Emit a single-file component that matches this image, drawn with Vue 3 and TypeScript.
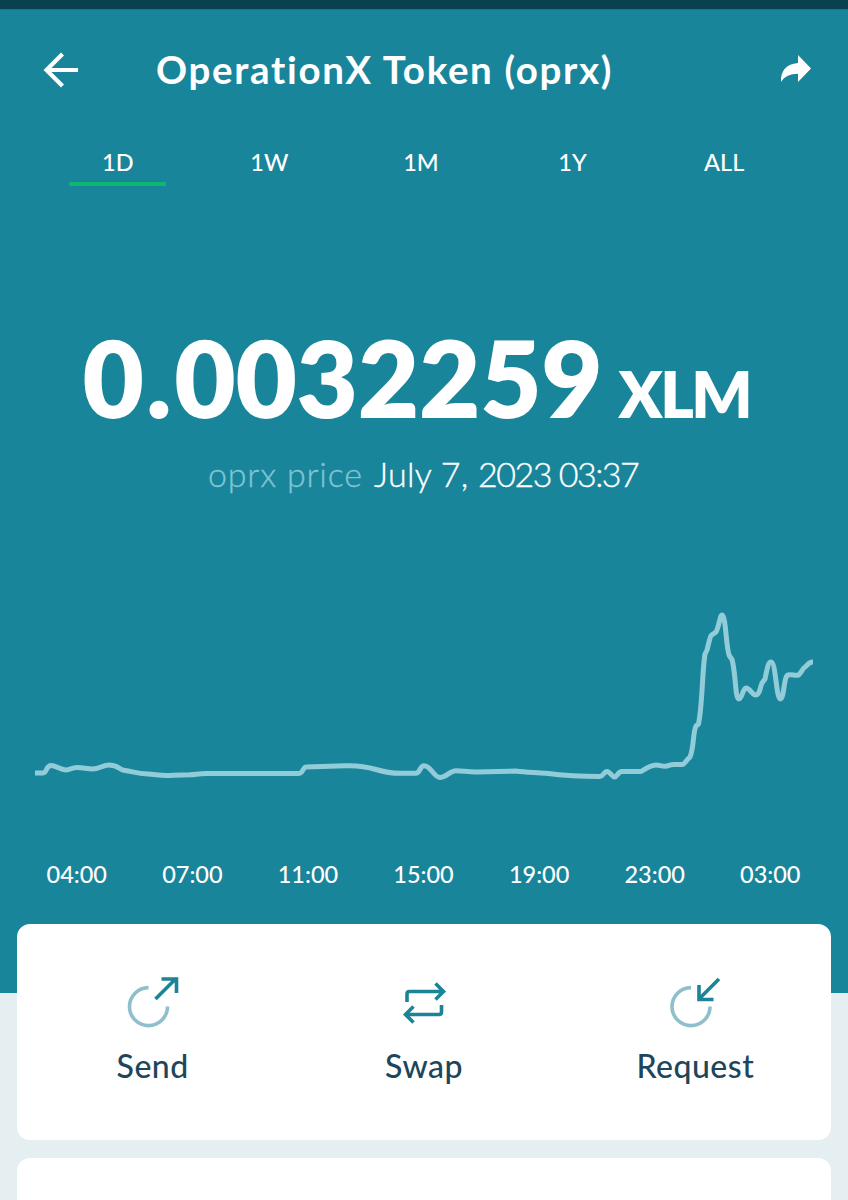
<script setup lang="ts">
interface Tab {
  label: string
  active?: boolean
}

const tabs: Tab[] = [
  { label: '1D', active: true },
  { label: '1W' },
  { label: '1M' },
  { label: '1Y' },
  { label: 'ALL' },
]

const times: string[] = ['04:00', '07:00', '11:00', '15:00', '19:00', '23:00', '03:00']

const pricePath =
  'M35 183H43C47 183 46 175.5 51 175.5C56 175.5 60 180 66 180C71 180 71 177.5 77 177.5C83 177.5 87 179 93 179C99 179 103 175 109 175C119 175 119 180 125 180.5C134 182 138 183.500 148 184C155 184.500 160 185.500 166 185.500C172 185.500 178 184.800 190 184.800C196 184.600 198 183.500 207 183.500H299C303 183.500 303 177 306 177L345 175.800C358 175.300 366 176.500 376 179.500C386 182.500 390 183.300 400 183.300H416C420 183.300 420 175.800 424 175.800C431 175.800 434 187.500 440 187.500C446 187.500 450 180.800 456 180.800C462 180.800 468 182 476 182L516 181C526 182.500 536 182.300 546 183.300C560 185 580 186.500 600 186.500C603 186.500 604 181.500 607 181.500C610 181.500 612 187 614.500 187C617 187 618 181.500 622 181.500H641C647 177.500 651 175 656 175C660 175 661 176.200 665 176.200C669 176.200 669 174.500 674 174.500H682C685 174.500 686 170 690 167C694 158 693 141 696 136L698.500 134C702.500 115 702 83 705 64L707 60C709 53 710 45 712.500 44.500L716 42C719 37 720 25 722 25C726 25 726 60 729.500 66L732 69.500C736 84 735 109 739 109C742 109 743 98 746 98C750 98 752 105 755.500 105C760 105 760 97 762 93L765 89C767 80 768 72 771 72C776 72 776 109 780.500 109C784 109 784 85 788 85C792 84 795 86 798.500 85C802 82 802 79 805 77C808 75 808 72 813 72'
</script>

<template>
  <main class="screen">
    <section class="hero">
      <div class="status"></div>
      <header class="bar">
        <svg class="back" width="36" height="36" viewBox="0 0 36 36">
          <path d="M19.500 2L3.500 18L19.500 34M3.500 18H35" />
        </svg>
        <h1 class="title"><span>OperationX Token (oprx)</span></h1>
        <svg class="share" width="32" height="30" viewBox="0 0 32 30">
          <path d="M18 1L31 14.500L18 28V19.800C10 19.800 4.500 22.500 1 28C.5 17 6 10 18 9Z" />
        </svg>
      </header>

      <nav class="tabs">
        <div v-for="tab in tabs" :key="tab.label" class="tab" :class="{ active: tab.active }">
          <span>{{ tab.label }}</span>
        </div>
      </nav>

      <div class="price"><span class="amount">0<span class="point">.</span>0032259</span><span class="unit">XLM</span></div>
      <div class="caption"><span class="muted">oprx price</span><span><span class="day">July 7, </span><span class="clock">2023 03:37</span></span></div>

      <svg class="chart" width="848" height="200" viewBox="0 0 848 200">
        <path :d="pricePath" />
      </svg>

      <div class="times">
        <span v-for="time in times" :key="time">{{ time }}</span>
      </div>
    </section>

    <section class="card actions">
      <div class="action">
        <svg width="54" height="54" viewBox="0 0 54 54">
          <path class="ring" d="M22.500 12.600A19 19 0 1 0 41.500 31.600" />
          <path class="stroke" d="M29.500 24L50 3.500M35.500 4H50.500V18" />
        </svg>
        <span>Send</span>
      </div>
      <div class="action">
        <svg width="54" height="54" viewBox="0 0 54 54">
          <path class="stroke" d="M10 27V19Q10 16.500 12.500 16.500H46M38.500 8.500L46.500 16.500L38.500 24.500M44.500 30V37Q44.500 39.500 42 39.500H9M16.500 31.500L8.500 39.500L16.500 47.500" />
        </svg>
        <span>Swap</span>
      </div>
      <div class="action">
        <svg width="54" height="54" viewBox="0 0 54 54">
          <path class="ring" d="M23 12.600A19 19 0 1 0 42 31.600" />
          <path class="stroke" d="M51 4L31 24M31 10V24.500H45.500" />
        </svg>
        <span>Request</span>
      </div>
    </section>
    <section class="card next"></section>
  </main>
</template>

<style>
body {
  margin: 0;
  background: #e5eff2;
}
</style>

<style scoped>
.screen {
  width: 848px;
  height: 1200px;
  overflow: hidden;
  background: #e5eff2;
  font-family: Lato, "Open Sans", sans-serif;
  color: #fff;
}
.hero {
  height: 993px;
  background: #19859a;
}
.status {
  height: 9px;
  background: #07424e;
  border-bottom: 1px solid #29707f;
}
.bar {
  display: flex;
  align-items: center;
  height: 60px;
  padding: 28px 36px 0 43px;
}
.back {
  margin-top: 4px;
  fill: none;
  stroke: #fff;
  stroke-width: 4.2;
}
.title {
  flex: 1;
  margin: 2px 0 0 77px;
  font-size: 38.5px;
  line-height: 60px;
  font-weight: 700;
  letter-spacing: 1.68px;
  white-space: nowrap;
}
.share {
  margin-top: 2px;
  fill: #fff;
}
.tabs {
  display: flex;
  width: 758px;
  margin: 44px 0 0 42px;
}
.tab {
  flex: 1;
  display: flex;
  flex-direction: column;
  align-items: center;
  font-size: 23.5px;
  line-height: 40px;
  font-weight: 500;
}
.tab::after {
  content: "";
  width: 97px;
  height: 4px;
  border-radius: 1px;
}
.tab.active::after {
  background: #0db96f;
}
.price {
  display: flex;
  align-items: baseline;
  height: 120px;
  margin: 131px 0 0 82.5px;
  line-height: 120px;
  font-weight: 800;
  white-space: nowrap;
}
.amount {
  font-size: 106px;
  letter-spacing: -0.3px;
}
.point {
  margin: 0 3px 0 2.5px;
}
.unit {
  margin-left: 16px;
  font-size: 64px;
  letter-spacing: -2.5px;
}
.caption {
  display: flex;
  margin: 17px 0 0 208px;
  font-size: 34px;
  line-height: 40px;
  font-weight: 300;
  white-space: nowrap;
  -webkit-text-stroke: 0.35px currentColor;
}
.muted {
  width: 166px;
  letter-spacing: 0.8px;
  color: #7fc4d4;
}
.day {
  letter-spacing: 0.3px;
}
.clock {
  letter-spacing: -1.5px;
}
.chart {
  display: block;
  margin-top: 96px;
  fill: none;
  stroke: #93ccd9;
  stroke-width: 5;
  stroke-linejoin: round;
}
.times {
  display: flex;
  width: 809px;
  margin: 69px 0 0 19px;
  font-size: 23.5px;
  line-height: 30px;
  font-weight: 500;
}
.times span {
  flex: 1;
  text-align: center;
}
.card {
  position: relative;
  width: 814px;
  margin-left: 17px;
  border-radius: 13px;
  background: #fff;
}
.actions {
  display: flex;
  height: 216px;
  margin-top: -69px;
}
.action {
  flex: 1;
  display: flex;
  flex-direction: column;
  align-items: center;
  padding-top: 51px;
  color: #1d465a;
  font-size: 32px;
  line-height: 40px;
  font-weight: 500;
  letter-spacing: 0.5px;
}
.action svg {
  margin-bottom: 17px;
  fill: none;
  stroke-width: 3.6;
}
.ring {
  stroke: #8fbfca;
}
.stroke {
  stroke: #1b8496;
}
.next {
  height: 60px;
  margin-top: 18px;
}
</style>
